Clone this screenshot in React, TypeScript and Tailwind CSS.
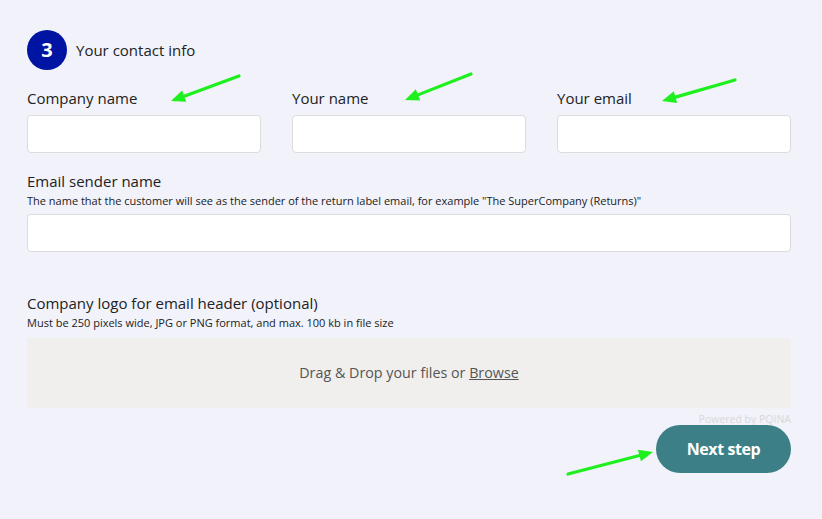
import React from "react";

function Arrow({ x1, y1, x2, y2 }: { x1: number; y1: number; x2: number; y2: number }) {
  const a = Math.atan2(y2 - y1, x2 - x1);
  const len = 14;
  const w = 6;
  const bx = x2 - len * Math.cos(a);
  const by = y2 - len * Math.sin(a);
  const px = -Math.sin(a) * w;
  const py = Math.cos(a) * w;
  return (
    <g>
      <line x1={x1} y1={y1} x2={bx} y2={by} stroke="#1ef01e" strokeWidth={3.2} strokeLinecap="round" />
      <polygon points={`${x2},${y2} ${bx + px},${by + py} ${bx - px},${by - py}`} fill="#1ef01e" />
    </g>
  );
}

function Field({ label }: { label: string }) {
  return (
    <div className="flex flex-col">
      <label className="text-[15px] font-medium text-[#222] leading-5 mb-[7px]">{label}</label>
      <input className="h-[38px] rounded-[4px] border border-[#dcdcdc] bg-white outline-none" />
    </div>
  );
}

export default function App() {
  return (
    <div
      className="relative w-full h-[519px] bg-[#f1f2fa] overflow-hidden pl-[27px] pr-[31px] pt-[30px]"
      style={{ fontFamily: '"Open Sans", "Noto Sans", sans-serif' }}
    >
      {/* Step heading */}
      <div className="flex items-center gap-[9px]">
        <div className="w-[40px] h-[40px] rounded-full bg-[#0014a3] flex items-center justify-center text-white font-bold text-[20px]">
          3
        </div>
        <h2 className="text-[15px] font-medium text-[#222]">Your contact info</h2>
      </div>

      {/* Name row */}
      <div className="grid grid-cols-3 gap-[31px] mt-[18px]">
        <Field label="Company name" />
        <Field label="Your name" />
        <Field label="Your email" />
      </div>

      {/* Sender name */}
      <div className="mt-[18px] flex flex-col">
        <label className="text-[15px] font-medium text-[#222] leading-5">Email sender name</label>
        <p className="text-[11px] text-[#222] leading-4 mt-[2px]">
          The name that the customer will see as the sender of the return label email, for example "The SuperCompany (Returns)"
        </p>
        <input className="mt-[5px] h-[38px] rounded-[4px] border border-[#dcdcdc] bg-white outline-none" />
      </div>

      {/* Logo upload */}
      <div className="mt-[41px] flex flex-col">
        <label className="text-[15px] font-medium text-[#222] leading-5">Company logo for email header (optional)</label>
        <p className="text-[11px] text-[#222] leading-4 mt-[2px]">
          Must be 250 pixels wide, JPG or PNG format, and max. 100 kb in file size
        </p>
        <div className="mt-[7px] h-[70px] rounded-[4px] bg-[#f0efed] flex items-center justify-center text-[14.3px] text-[#555]">
          Drag &amp; Drop your files or&nbsp;<span className="underline">Browse</span>
        </div>
        <div className="text-right text-[10.5px] text-[#d8d8d8] mt-[3px] leading-4">Powered by PQINA</div>
      </div>

      <div className="flex justify-end -mt-[2px]">
        <button className="w-[135px] h-[48px] rounded-full bg-[#3d7f86] text-white font-bold text-[16px] tracking-tight">
          Next step
        </button>
      </div>

      {/* annotation arrows */}
      <svg className="absolute inset-0 pointer-events-none" width="822" height="519">
        <Arrow x1={239} y1={76} x2={171} y2={101} />
        <Arrow x1={471} y1={74} x2={405} y2={100} />
        <Arrow x1={735} y1={80} x2={662} y2={101} />
        <Arrow x1={568} y1={474} x2={653} y2={452} />
      </svg>
    </div>
  );
}
